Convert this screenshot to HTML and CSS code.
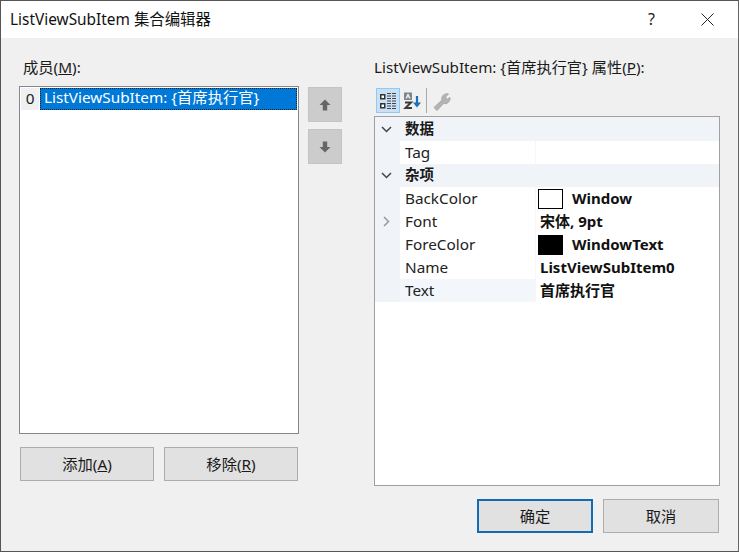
FILE: index.html
```html
<!DOCTYPE html>
<html lang="zh-CN">
<head>
<meta charset="utf-8">
<title>ListViewSubItem 集合编辑器</title>
<link rel="stylesheet" href="styles.css">
</head>
<body>
<div class="window">
  <header class="titlebar">
    <span class="title">ListViewSubItem 集合编辑器</span>
    <span class="help">?</span>
    <svg class="close" width="13" height="13" viewBox="0 0 13 13"><path d="M.5.5l12 12M12.5.5l-12 12" stroke="#222" stroke-width="1" fill="none"/></svg>
  </header>
  <main class="content">
    <section class="left">
      <div class="label">成员(<u>M</u>):</div>
      <div class="list-row">
        <div class="listbox">
          <div class="item">
            <span class="index">0</span>
            <span class="selected">ListViewSubItem: {首席执行官}</span>
          </div>
        </div>
        <div class="arrows">
          <div class="arrow"><svg width="12" height="12" viewBox="0 0 12 12"><path d="M6 .5L11.500 6H8.200v5.500H3.800V6H.5z" fill="#666"/></svg></div>
          <div class="arrow"><svg width="12" height="12" viewBox="0 0 12 12"><path d="M6 11.500L11.500 6H8.200V.5H3.800V6H.5z" fill="#666"/></svg></div>
        </div>
      </div>
      <div class="list-actions">
        <button class="btn">添加(<u>A</u>)</button>
        <button class="btn">移除(<u>R</u>)</button>
      </div>
    </section>
    <section class="right">
      <div class="label">ListViewSubItem: {首席执行官} 属性(<u>P</u>):</div>
      <div class="toolbar">
        <span class="tool active">
          <svg width="18" height="18" viewBox="0 0 18 18"><g fill="#fff" stroke="#333" stroke-width="1.500"><rect x="1.750" y="2.750" width="4" height="4"/><rect x="1.750" y="11.750" width="4" height="4"/></g><path d="M8 1.500h9M8 4h9M8 6.500h9M8 9h9M8 11.500h9M8 14h9M8 16.500h9" stroke="#444" stroke-width="1.200" stroke-dasharray="4 1" fill="none"/></svg>
        </span>
        <span class="tool">
          <svg width="20" height="20" viewBox="0 0 20 20"><path d="M2 9V1.500h8V9z" fill="#7d858d"/><path d="M4 7.500l2-4.500 2 4.500M4.800 6h2.400" stroke="#fff" fill="none"/><path d="M3 11.500h6L3.500 17H10" stroke="#3c3c3c" stroke-width="2" fill="none"/><path d="M15 5v10" stroke="#1c6fb8" stroke-width="2.200"/><path d="M11 11.500l4 5 4-5z" fill="#1c6fb8"/></svg>
        </span>
        <span class="sep"></span>
        <span class="tool">
          <svg width="20" height="20" viewBox="0 0 20 20"><path d="M2 16.500l8-7.500c-1-3.500 2-7 6.500-6l-3 3 1.500 2.500 3-2c.5 4-3 7-6.500 6l-6.500 7z" fill="#b4b4b4" stroke="#a8a8a8"/></svg>
        </span>
      </div>
      <div class="grid">
        <div class="cat"><span class="gutter"><svg width="11" height="7" viewBox="0 0 11 7"><path d="M1 1l4.500 4.500L10 1" stroke="#444" stroke-width="1.500" fill="none"/></svg></span><b>数据</b></div>
        <div class="prop"><span class="gutter"></span><span class="name">Tag</span><span class="value"></span></div>
        <div class="cat"><span class="gutter"><svg width="11" height="7" viewBox="0 0 11 7"><path d="M1 1l4.500 4.500L10 1" stroke="#444" stroke-width="1.500" fill="none"/></svg></span><b>杂项</b></div>
        <div class="prop"><span class="gutter"></span><span class="name">BackColor</span><span class="value"><i class="swatch white"></i><span class="value-text">Window</span></span></div>
        <div class="prop"><span class="gutter"><svg width="7" height="11" viewBox="0 0 7 11"><path d="M1 1l4.500 4.500L1 10" stroke="#999" stroke-width="1.500" fill="none"/></svg></span><span class="name">Font</span><span class="value"><span class="value-text">宋体, 9pt</span></span></div>
        <div class="prop"><span class="gutter"></span><span class="name">ForeColor</span><span class="value"><i class="swatch black"></i><span class="value-text">WindowText</span></span></div>
        <div class="prop"><span class="gutter"></span><span class="name">Name</span><span class="value"><span class="value-text">ListViewSubItem0</span></span></div>
        <div class="prop"><span class="gutter"></span><span class="name tint">Text</span><span class="value"><span class="value-text">首席执行官</span></span></div>
      </div>
    </section>
  </main>
  <footer class="footer">
    <button class="btn wide default">确定</button>
    <button class="btn wide">取消</button>
  </footer>
</div>
</body>
</html>
```
FILE: styles.css
```css
* { box-sizing: border-box; }
html, body { margin: 0; padding: 0; }
body {
  font-family: "Noto Sans", "Noto Sans CJK SC", sans-serif;
  font-size: 15.3px;
  color: #1a1a1a;
}
.window {
  width: 739px;
  height: 552px;
  background: #f0f0f0;
  border: 1px solid #555;
  border-right-color: #666;
  display: flex;
  flex-direction: column;
  overflow: hidden;
}
.titlebar {
  height: 37px;
  flex: none;
  background: #fff;
  display: flex;
  align-items: center;
  padding: 0 24px 0 9px;
}
.title { flex: 1; font-size: 15.4px; color: #111; margin-top: -3px; }
.help { margin-right: 46px; font-size: 16px; margin-top: -2px; }
.content {
  flex: 1;
  display: flex;
  padding-top: 18px;
}
.left { width: 354px; padding-left: 18px; flex: none; }
.right { flex: 1; padding-left: 19px; }
.label { height: 30px; padding-left: 4px; line-height: 22px; white-space: nowrap; }
.right .label { padding-left: 0; height: 32px; font-size: 15.2px; }
.list-row { display: flex; }
.listbox {
  width: 280px;
  height: 348px;
  background: #fff;
  border: 1px solid #828790;
  padding: 1px;
}
.item { display: flex; height: 22px; }
.index {
  width: 19px;
  background: #f0f0f0;
  text-align: center;
  line-height: 20px;
  border-right: 1px solid #fff;
}
.selected {
  flex: 1;
  background: #0078d7;
  color: #fff;
  line-height: 19px;
  padding-left: 4px;
  outline: 1px dotted #222;
  outline-offset: -1px;
  white-space: nowrap;
}
.arrows {
  display: flex;
  flex-direction: column;
  gap: 7px;
  margin-left: 9px;
  padding-top: 1px;
}
.arrow {
  width: 34px;
  height: 35px;
  background: #cccccc;
  border: 1px solid #c4c4c4;
  display: flex;
  align-items: center;
  justify-content: center;
}
.list-actions { display: flex; gap: 10px; margin: 13px 0 0 1px; }
.btn {
  width: 134px;
  height: 34px;
  background: #e1e1e1;
  border: 1px solid #adadad;
  font: inherit;
  color: #1a1a1a;
  padding: 0 0 2px;
}
.btn.wide { width: 116px; }
.btn.default { border: 2px solid #0f6cb5; }
.toolbar {
  height: 25px;
  margin-bottom: 3px;
  margin-left: 2px;
  display: flex;
  align-items: center;
}
.tool {
  width: 24px;
  height: 25px;
  display: flex;
  align-items: center;
  justify-content: center;
}
.tool.active { background: #c9e0f7; border: 1px solid #90c8f6; }
.sep { width: 1px; height: 25px; background: #a8a8a8; margin: 0 3px 0 2px; }
.grid {
  width: 346px;
  height: 370px;
  background: #fff;
  border: 1px solid #a0a0a0;
}
.cat, .prop { display: flex; align-items: center; height: 23px; }
.cat { background: #f0f4f9; }
.cat:first-child { height: 24px; }
.cat b { font-weight: 700; font-size: 14.5px; padding: 0 0 4px 5px; }
.gutter {
  width: 25px;
  flex: none;
  height: 100%;
  background: #f0f4f9;
  display: flex;
  align-items: center;
  justify-content: center;
  padding-right: 2px;
}
.name {
  width: 136px;
  flex: none;
  height: 100%;
  padding-left: 5px;
  line-height: 23px;
  color: #222;
  border-right: 1px solid #f5f7fa;
}
.name.tint { background: #f3f6fa; }
.value {
  flex: 1;
  padding-left: 4px;
  font-weight: 700;
  font-size: 15px;
  display: flex;
  align-items: center;
  color: #111;
  white-space: nowrap;
}
.value-text { margin-bottom: 2px; }
.swatch {
  width: 25px;
  height: 20px;
  margin: 0 9px 0 -2px;
  border: 1px solid #000;
  flex: none;
}
.swatch.white { background: #fff; }
.swatch.black { background: #000; }
.footer {
  flex: none;
  height: 65px;
  display: flex;
  justify-content: flex-end;
  gap: 10px;
  padding: 13px 19px 0 0;
}
```
